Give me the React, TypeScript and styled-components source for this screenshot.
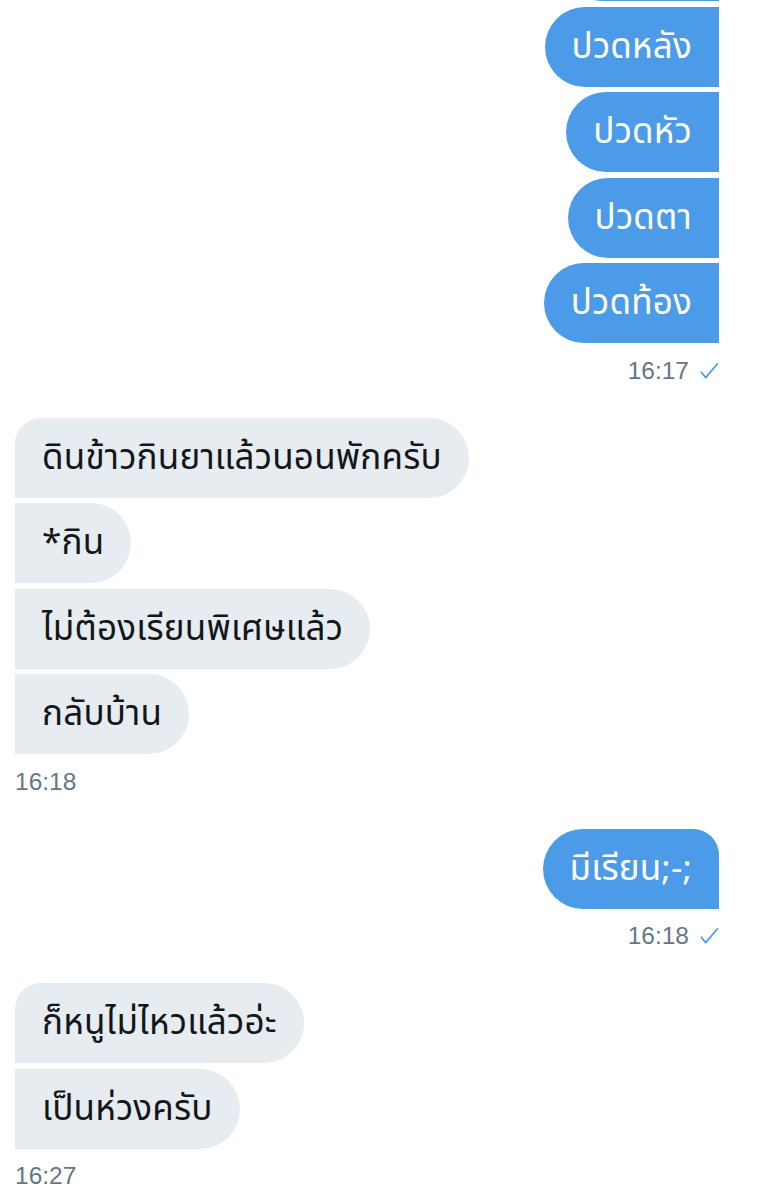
import React from "react";
import styled, { createGlobalStyle, css } from "styled-components";

const GlobalStyle = createGlobalStyle`
  html, body {
    margin: 0;
    padding: 0;
    background: #ffffff;
  }
  body {
    font-family: "Noto Sans Thai", "Noto Sans Thai UI", "Liberation Sans", "DejaVu Sans", sans-serif;
  }
`;

type Side = "in" | "out";

const Thread = styled.div`
  display: flex;
  flex-direction: column;
  padding: 0 42px 0 15px;
  margin-top: -79px;
  overflow: hidden;
`;

const Group = styled.div<{ $side: Side }>`
  display: flex;
  flex-direction: column;
  align-items: ${(p) => (p.$side === "out" ? "flex-end" : "flex-start")};
  margin-bottom: 32px;
`;

const Bubbles = styled.div<{ $side: Side }>`
  display: flex;
  flex-direction: column;
  align-items: ${(p) => (p.$side === "out" ? "flex-end" : "flex-start")};
  gap: 5.5px;
`;

const Bubble = styled.div<{ $side: Side; $first: boolean }>`
  box-sizing: border-box;
  height: 80px;
  padding: 2px 27px 0;
  display: flex;
  align-items: center;
  font-family: "Noto Sans Thai", "Noto Sans Thai UI", "Liberation Sans", "DejaVu Sans", sans-serif;
  font-size: 35px;
  line-height: 44px;
  letter-spacing: 0.2px;
  white-space: nowrap;
  ${(p) =>
    p.$side === "out"
      ? css`
          background: #4b9be8;
          color: #ffffff;
          border-radius: 40px ${p.$first ? "26px" : "0"} 0 40px;
        `
      : css`
          background: #e6ecf0;
          color: #14171a;
          border-radius: ${p.$first ? "26px" : "0"} 40px 40px 0;
        `}
`;

/* the bottom edge of an earlier bubble, scrolled almost out of view */
const Sliver = styled(Bubble)`
  width: 156px;
`;

const Meta = styled.div`
  display: flex;
  align-items: center;
  gap: 10px;
  margin-top: 12.5px;
  height: 30px;
  font-family: "Liberation Sans", Arial, sans-serif;
  font-size: 24.5px;
  line-height: 30px;
  color: #657786;
`;

const Check = () => (
  <svg width="20" height="18" viewBox="0 0 20 18" fill="none" aria-hidden="true">
    <path
      d="M2.3 10.2 L6.7 15.6 L18.4 1.8"
      stroke="#4b9be8"
      strokeWidth="1.7"
      strokeLinecap="round"
      strokeLinejoin="round"
    />
  </svg>
);

type Msg = { side: Side; texts: string[]; time: string; continued?: boolean };

const messages: Msg[] = [
  { side: "out", texts: ["ปวดหลัง", "ปวดหัว", "ปวดตา", "ปวดท้อง"], time: "16:17", continued: true },
  {
    side: "in",
    texts: ["ดินข้าวกินยาแล้วนอนพักครับ", "*กิน", "ไม่ต้องเรียนพิเศษแล้ว", "กลับบ้าน"],
    time: "16:18",
  },
  { side: "out", texts: ["มีเรียน;-;"], time: "16:18" },
  { side: "in", texts: ["ก็หนูไม่ไหวแล้วอ่ะ", "เป็นห่วงครับ"], time: "16:27" },
];

export default function App() {
  return (
    <>
      <GlobalStyle />
      <Thread>
        {messages.map((m, gi) => (
          <Group key={gi} $side={m.side}>
            <Bubbles $side={m.side}>
              {m.continued && <Sliver $side={m.side} $first={false} aria-hidden="true" />}
              {m.texts.map((t, i) => (
                <Bubble key={i} $side={m.side} $first={i === 0 && !m.continued}>
                  {t}
                </Bubble>
              ))}
            </Bubbles>
            <Meta>
              <span>{m.time}</span>
              {m.side === "out" && <Check />}
            </Meta>
          </Group>
        ))}
      </Thread>
    </>
  );
}
